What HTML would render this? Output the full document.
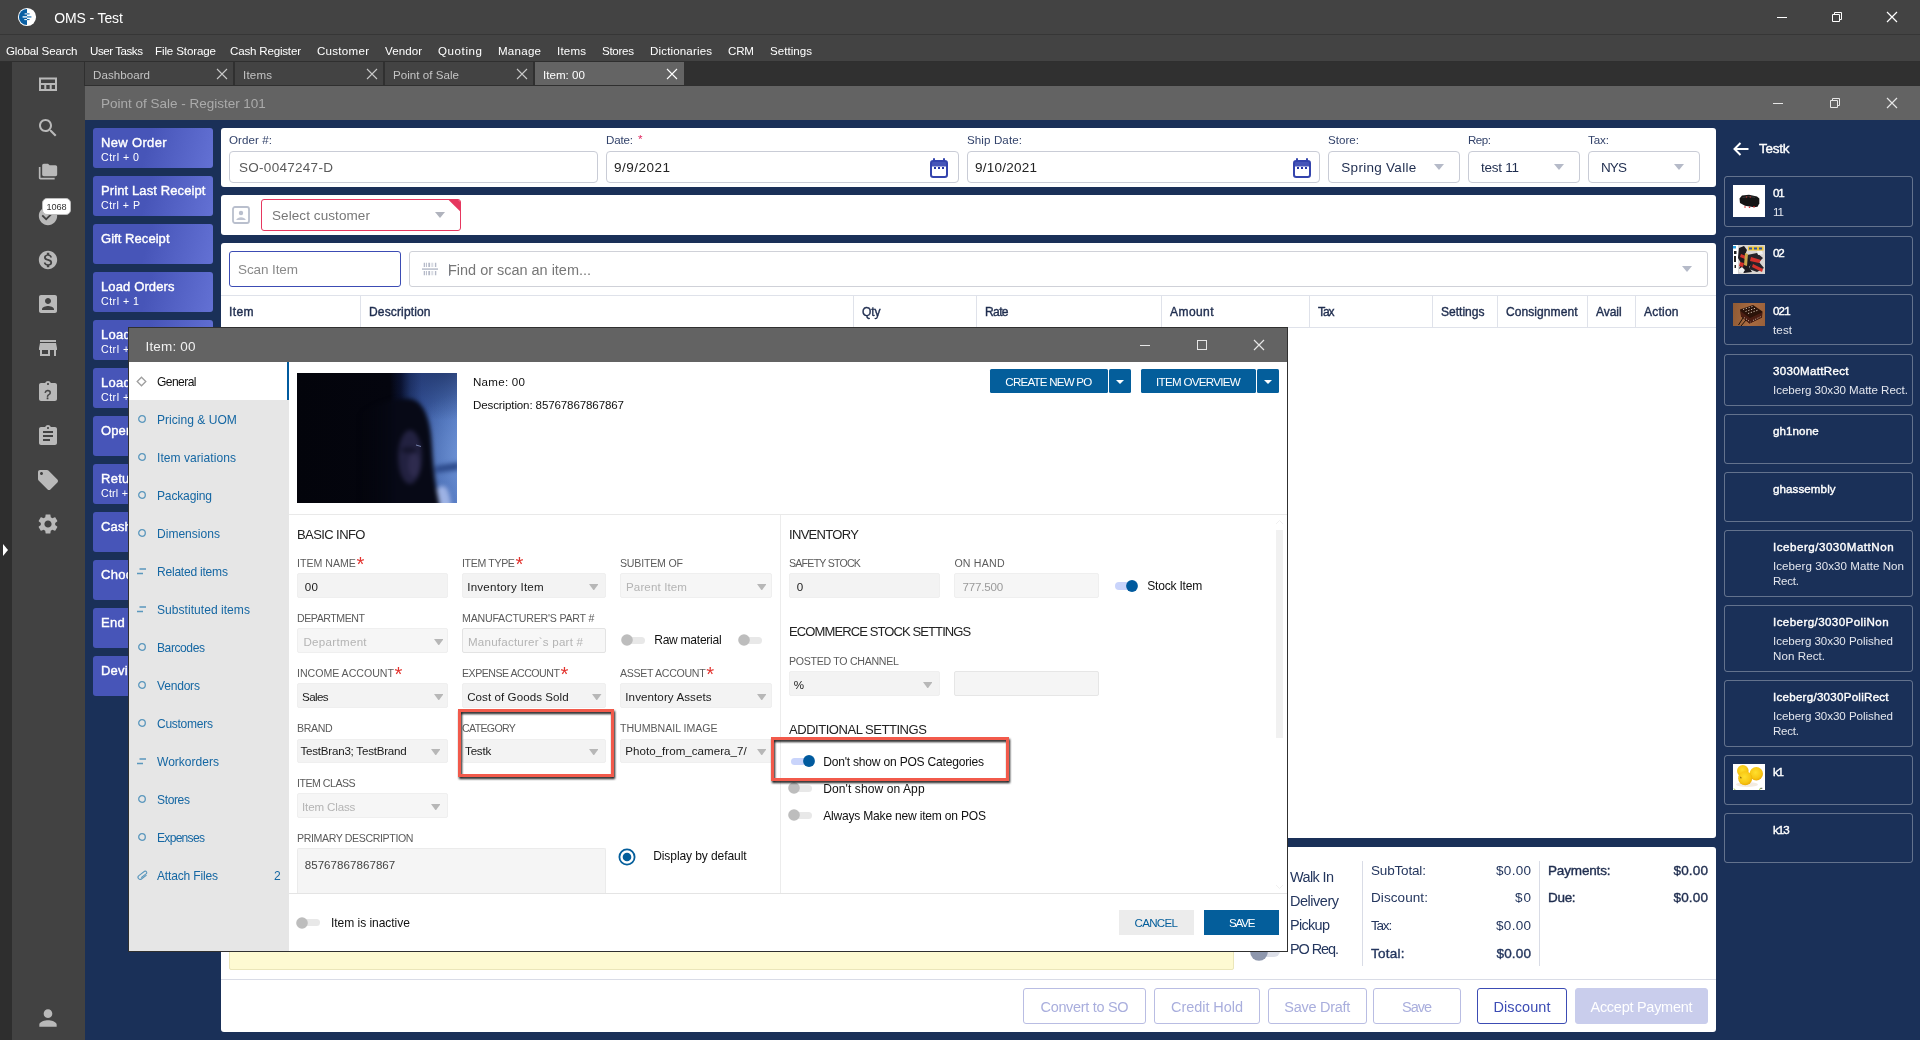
<!DOCTYPE html>
<html lang="en"><head><meta charset="utf-8"><title>OMS - Test</title>
<style>
html,body{margin:0;padding:0}
body{width:1920px;height:1040px;overflow:hidden;position:relative;background:#1a3058;font-family:"Liberation Sans",sans-serif}
#root{position:absolute;left:0;top:0;width:1920px;height:1040px;will-change:transform}
.b{position:absolute;display:block}
.t{position:absolute;white-space:nowrap;line-height:20px;height:20px}
</style></head>
<body>
<div id="root">
<div class="b" style="left:0px;top:0px;width:1920px;height:34px;background:#434343"></div>
<div class="b" style="left:0px;top:34px;width:1920px;height:1px;background:#363636"></div>
<div class="b" style="left:0px;top:35px;width:1920px;height:26px;background:#434343"></div>
<div class="b" style="left:0px;top:61px;width:1920px;height:25px;background:#303030"></div>
<div class="b" style="left:0px;top:61px;width:12px;height:979px;background:#2e2e2e"></div>
<div class="b" style="left:12px;top:61px;width:73px;height:979px;background:#424242"></div>
<div class="b" style="left:0px;top:61px;width:1920px;height:1px;background:#2f2f2f"></div>
<div class="b" style="left:84px;top:62px;width:1px;height:24px;background:#2f2f2f"></div>
<svg class="b" style="left:17px;top:7px;" width="20" height="20" viewBox="0 0 20 20"><circle cx="10" cy="10" r="9.100" fill="#fff"/><path d="M10 1.900a8.100 8.100 0 0 0 0 16.200z" fill="#0a5fa3"/><path d="M7.600 6.900H10M7.300 12.600H10" stroke="#fff" stroke-width="1"/><path d="M5.600 9.900H10" stroke="#cfe1f0" stroke-width="1.700"/><path d="M10 6.900h2.600M10 12.600h2.600" stroke="#0a5fa3" stroke-width="1"/><path d="M10 9.900h4.400" stroke="#5b9bcb" stroke-width="1.700"/></svg>
<span class="t" style="top:8px;font-size:13.99px;color:#fff;left:54.3px;letter-spacing:-0.123px;">OMS - Test</span>
<div class="b" style="left:1777px;top:17px;width:10px;height:1px;background:#fff"></div>
<svg class="b" style="left:1831px;top:11px;" width="12" height="12" viewBox="0 0 12 12"><path d="M1.5 3.5h7v7h-7zM3.5 3.5v-2h7v7h-2" fill="none" stroke="#fff" stroke-width="1"/></svg>
<svg class="b" style="left:1886px;top:11px;" width="12" height="12" viewBox="0 0 12 12"><path d="M1 1l10 10M11 1l-10 10" fill="none" stroke="#fff" stroke-width="1.2"/></svg>
<span class="t" style="top:40.5px;font-size:11.58px;color:#fff;left:6px;letter-spacing:-0.157px;">Global Search</span>
<span class="t" style="top:40.5px;font-size:11.58px;color:#fff;left:90px;letter-spacing:-0.451px;">User Tasks</span>
<span class="t" style="top:40.5px;font-size:11.58px;color:#fff;left:155px;letter-spacing:-0.130px;">File Storage</span>
<span class="t" style="top:40.5px;font-size:11.58px;color:#fff;left:230px;letter-spacing:-0.198px;">Cash Register</span>
<span class="t" style="top:40.5px;font-size:11.58px;color:#fff;left:317px;letter-spacing:0.258px;">Customer</span>
<span class="t" style="top:40.5px;font-size:11.58px;color:#fff;left:385px;letter-spacing:0.060px;">Vendor</span>
<span class="t" style="top:40.5px;font-size:11.58px;color:#fff;left:438px;letter-spacing:0.574px;">Quoting</span>
<span class="t" style="top:40.5px;font-size:11.58px;color:#fff;left:498px;letter-spacing:0.230px;">Manage</span>
<span class="t" style="top:40.5px;font-size:11.58px;color:#fff;left:557px;letter-spacing:0.172px;">Items</span>
<span class="t" style="top:40.5px;font-size:11.58px;color:#fff;left:602px;letter-spacing:-0.294px;">Stores</span>
<span class="t" style="top:40.5px;font-size:11.58px;color:#fff;left:650px;letter-spacing:0.137px;">Dictionaries</span>
<span class="t" style="top:40.5px;font-size:11.58px;color:#fff;left:728px;letter-spacing:-0.186px;">CRM</span>
<span class="t" style="top:40.5px;font-size:11.58px;color:#fff;left:770px;letter-spacing:0.023px;">Settings</span>
<div class="b" style="left:85px;top:62px;width:148px;height:23px;background:#434343"></div>
<span class="t" style="top:64.5px;font-size:11.58px;color:#c4c4c4;left:93px;letter-spacing:0.044px;">Dashboard</span>
<svg class="b" style="left:216px;top:68px;" width="12" height="12" viewBox="0 0 12 12"><path d="M1 1l10 10M11 1L1 11" stroke="#c8c8c8" stroke-width="1.1" fill="none"/></svg>
<div class="b" style="left:235px;top:62px;width:148px;height:23px;background:#434343"></div>
<span class="t" style="top:64.5px;font-size:11.58px;color:#c4c4c4;left:243px;letter-spacing:0.172px;">Items</span>
<svg class="b" style="left:366px;top:68px;" width="12" height="12" viewBox="0 0 12 12"><path d="M1 1l10 10M11 1L1 11" stroke="#c8c8c8" stroke-width="1.1" fill="none"/></svg>
<div class="b" style="left:385px;top:62px;width:148px;height:23px;background:#434343"></div>
<span class="t" style="top:64.5px;font-size:11.58px;color:#c4c4c4;left:393px;letter-spacing:0.028px;">Point of Sale</span>
<svg class="b" style="left:516px;top:68px;" width="12" height="12" viewBox="0 0 12 12"><path d="M1 1l10 10M11 1L1 11" stroke="#c8c8c8" stroke-width="1.1" fill="none"/></svg>
<div class="b" style="left:535px;top:62px;width:149px;height:23px;background:#646464"></div>
<span class="t" style="top:64.5px;font-size:11.58px;color:#fff;left:543px;letter-spacing:0.023px;">Item: 00</span>
<svg class="b" style="left:666px;top:68px;" width="12" height="12" viewBox="0 0 12 12"><path d="M1 1l10 10M11 1L1 11" stroke="#fff" stroke-width="1.1" fill="none"/></svg>
<div class="b" style="left:85px;top:85px;width:1835px;height:1px;background:#2f2f2f"></div>
<svg class="b" style="left:38px;top:76px;" width="20" height="16" viewBox="0 0 20 16"><path d="M2 2.500h16v11.500H2zM2 8h16M7.300 8v6M12.700 8v6" fill="none" stroke="#b9b9b9" stroke-width="2"/></svg>
<svg class="b" style="left:36px;top:116px;" width="24" height="24" viewBox="0 0 24 24"><path d="M15.5 14h-.79l-.28-.27C15.41 12.59 16 11.11 16 9.5 16 5.91 13.09 3 9.5 3S3 5.91 3 9.5 5.91 16 9.5 16c1.61 0 3.09-.59 4.23-1.57l.27.28v.79l5 4.99L20.49 19l-4.99-5zm-6 0C7.01 14 5 11.99 5 9.5S7.01 5 9.5 5 14 7.01 14 9.5 11.99 14 9.5 14z" fill="#b9b9b9"/></svg>
<svg class="b" style="left:38px;top:162px;" width="20" height="20" viewBox="0 0 24 24"><path d="M3 6H1v13c0 1.1.9 2 2 2h17v-2H3V6z M21 4h-7l-2-2H7c-1.1 0-1.99.9-1.99 2L5 15c0 1.1.9 2 2 2h14c1.1 0 2-.9 2-2V6c0-1.1-.9-2-2-2z" fill="#b9b9b9"/></svg>
<svg class="b" style="left:37px;top:205px;" width="22" height="22" viewBox="0 0 24 24"><path d="M12 2C6.48 2 2 6.48 2 12s4.48 10 10 10 10-4.48 10-10S17.52 2 12 2zm-2 15l-5-5 1.41-1.41L10 14.17l7.59-7.59L19 8l-9 9z" fill="#b9b9b9"/></svg>
<div class="b" style="left:42px;top:198px;width:29px;height:17px;background:#fff;border-radius:5px;border:1px solid #bbb;box-sizing:border-box"></div>
<span class="t" style="top:196.5px;font-size:9.17px;color:#333;left:46.5px;letter-spacing:-0.133px;">1068</span>
<svg class="b" style="left:37px;top:249px;" width="22" height="22" viewBox="0 0 24 24"><path d="M12 2C6.48 2 2 6.48 2 12s4.48 10 10 10 10-4.48 10-10S17.52 2 12 2zm1.41 16.09V20h-2.67v-1.93c-1.71-.36-3.16-1.46-3.27-3.4h1.96c.1 1.05.82 1.87 2.65 1.87 1.96 0 2.4-.98 2.4-1.59 0-.83-.44-1.61-2.67-2.14-2.48-.6-4.18-1.62-4.18-3.67 0-1.72 1.39-2.84 3.11-3.21V4h2.67v1.95c1.86.45 2.79 1.86 2.85 3.39H14.3c-.05-1.11-.64-1.87-2.22-1.87-1.5 0-2.4.68-2.4 1.64 0 .84.65 1.39 2.67 1.91s4.18 1.39 4.18 3.91c-.01 1.83-1.38 2.83-3.12 3.16z" fill="#b9b9b9"/></svg>
<svg class="b" style="left:36px;top:292px;" width="24" height="24" viewBox="0 0 24 24"><path d="M3 5v14c0 1.1.89 2 2 2h14c1.1 0 2-.9 2-2V5c0-1.1-.9-2-2-2H5c-1.11 0-2 .9-2 2zm12 4c0 1.66-1.34 3-3 3s-3-1.34-3-3 1.34-3 3-3 3 1.34 3 3zm-9 8c0-2 4-3.1 6-3.1s6 1.1 6 3.1v1H6v-1z" fill="#b9b9b9"/></svg>
<svg class="b" style="left:36px;top:336px;" width="24" height="24" viewBox="0 0 24 24"><path d="M20 4H4v2h16V4zm1 10v-2l-1-5H4l-1 5v2h1v6h10v-6h4v6h2v-6h1zm-9 4H6v-4h6v4z" fill="#b9b9b9"/></svg>
<svg class="b" style="left:36px;top:380px;" width="24" height="24" viewBox="0 0 24 24"><path d="M19 3h-4.18C14.4 1.84 13.3 1 12 1c-1.3 0-2.4.84-2.82 2H5c-1.1 0-2 .9-2 2v14c0 1.1.9 2 2 2h14c1.1 0 2-.9 2-2V5c0-1.1-.9-2-2-2zm-7 0c.55 0 1 .45 1 1s-.45 1-1 1-1-.45-1-1 .45-1 1-1z" fill="#b9b9b9"/></svg>
<span class="t" style="top:384.5px;font-size:12.54px;color:#404040;left:44.3px;-webkit-text-stroke:0.38px #404040;">?</span>
<svg class="b" style="left:36px;top:424px;" width="24" height="24" viewBox="0 0 24 24"><path d="M19 3h-4.18C14.4 1.84 13.3 1 12 1c-1.3 0-2.4.84-2.82 2H5c-1.1 0-2 .9-2 2v14c0 1.1.9 2 2 2h14c1.1 0 2-.9 2-2V5c0-1.1-.9-2-2-2zm-7 0c.55 0 1 .45 1 1s-.45 1-1 1-1-.45-1-1 .45-1 1-1zm2 14H7v-2h7v2zm3-4H7v-2h10v2zm0-4H7V7h10v2z" fill="#b9b9b9"/></svg>
<svg class="b" style="left:36px;top:468px;" width="24" height="24" viewBox="0 0 24 24"><path d="M21.41 11.58l-9-9C12.05 2.22 11.55 2 11 2H4c-1.1 0-2 .9-2 2v7c0 .55.22 1.05.59 1.42l9 9c.36.36.86.58 1.41.58.55 0 1.05-.22 1.41-.59l7-7c.37-.36.59-.86.59-1.41 0-.55-.23-1.06-.59-1.42zM5.5 7C4.67 7 4 6.33 4 5.5S4.67 4 5.5 4 7 4.67 7 5.5 6.33 7 5.5 7z" fill="#b9b9b9"/></svg>
<svg class="b" style="left:36px;top:512px;" width="24" height="24" viewBox="0 0 24 24"><path d="M19.14 12.94c.04-.3.06-.61.06-.94 0-.32-.02-.64-.07-.94l2.03-1.58c.18-.14.23-.41.12-.61l-1.92-3.32c-.12-.22-.37-.29-.59-.22l-2.39.96c-.5-.38-1.03-.7-1.62-.94l-.36-2.54c-.04-.24-.24-.41-.48-.41h-3.84c-.24 0-.43.17-.47.41l-.36 2.54c-.59.24-1.13.57-1.62.94l-2.39-.96c-.22-.08-.47 0-.59.22L2.74 8.87c-.12.21-.08.47.12.61l2.03 1.58c-.05.3-.09.63-.09.94s.02.64.07.94l-2.03 1.58c-.18.14-.23.41-.12.61l1.92 3.32c.12.22.37.29.59.22l2.39-.96c.5.38 1.03.7 1.62.94l.36 2.54c.05.24.24.41.48.41h3.84c.24 0 .44-.17.47-.41l.36-2.54c.59-.24 1.13-.56 1.62-.94l2.39.96c.22.08.47 0 .59-.22l1.92-3.32c.12-.22.07-.47-.12-.61l-2.01-1.58zM12 15.6c-1.98 0-3.6-1.62-3.6-3.6s1.62-3.6 3.6-3.6 3.6 1.62 3.6 3.6-1.62 3.6-3.6 3.6z" fill="#b9b9b9"/></svg>
<svg class="b" style="left:35px;top:1005px;" width="26" height="26" viewBox="0 0 24 24"><path d="M12 12c2.21 0 4-1.79 4-4s-1.79-4-4-4-4 1.79-4 4 1.79 4 4 4zm0 2c-2.67 0-8 1.34-8 4v2h16v-2c0-2.66-5.33-4-8-4z" fill="#b9b9b9"/></svg>
<svg class="b" style="left:2px;top:544px;" width="7" height="12" viewBox="0 0 7 12"><path d="M1 0l5 6-5 6z" fill="#fff"/></svg>
<div class="b" style="left:85px;top:86px;width:1835px;height:34px;background:#636363"></div>
<span class="t" style="top:94px;font-size:13.51px;color:#ababab;left:101px;letter-spacing:-0.008px;">Point of Sale - Register 101</span>
<div class="b" style="left:1773px;top:103px;width:10px;height:1px;background:#e6e6e6"></div>
<svg class="b" style="left:1829px;top:97px;" width="12" height="12" viewBox="0 0 12 12"><path d="M1.5 3.5h7v7h-7zM3.5 3.5v-2h7v7h-2" fill="none" stroke="#e6e6e6" stroke-width="1"/></svg>
<svg class="b" style="left:1886px;top:97px;" width="12" height="12" viewBox="0 0 12 12"><path d="M1 1l10 10M11 1l-10 10" fill="none" stroke="#e6e6e6" stroke-width="1.2"/></svg>
<div class="b" style="left:85px;top:120px;width:1835px;height:920px;background:#1a3058"></div>
<div class="b" style="left:93px;top:128px;width:120px;height:40px;border-radius:3px;background:linear-gradient(105deg,#4755b8 45%,#6371d4 100%)"></div>
<span class="t" style="top:132.5px;font-size:13.03px;color:#fff;left:101px;-webkit-text-stroke:0.38px #fff;letter-spacing:0.326px;">New Order</span>
<span class="t" style="top:147px;font-size:10.62px;color:#fff;left:101px;letter-spacing:0.496px;">Ctrl + 0</span>
<div class="b" style="left:93px;top:176px;width:120px;height:40px;border-radius:3px;background:linear-gradient(105deg,#4755b8 45%,#6371d4 100%)"></div>
<span class="t" style="top:180.5px;font-size:13.03px;color:#fff;left:101px;-webkit-text-stroke:0.38px #fff;letter-spacing:0.103px;">Print Last Receipt</span>
<span class="t" style="top:195px;font-size:10.62px;color:#fff;left:101px;letter-spacing:0.471px;">Ctrl + P</span>
<div class="b" style="left:93px;top:224px;width:120px;height:40px;border-radius:3px;background:linear-gradient(105deg,#4755b8 45%,#6371d4 100%)"></div>
<span class="t" style="top:228.5px;font-size:13.03px;color:#fff;left:101px;-webkit-text-stroke:0.38px #fff;letter-spacing:0.048px;">Gift Receipt</span>
<div class="b" style="left:93px;top:272px;width:120px;height:40px;border-radius:3px;background:linear-gradient(105deg,#4755b8 45%,#6371d4 100%)"></div>
<span class="t" style="top:276.5px;font-size:13.03px;color:#fff;left:101px;-webkit-text-stroke:0.38px #fff;letter-spacing:0.117px;">Load Orders</span>
<span class="t" style="top:291px;font-size:10.62px;color:#fff;left:101px;letter-spacing:0.496px;">Ctrl + 1</span>
<div class="b" style="left:93px;top:320px;width:120px;height:40px;border-radius:3px;background:linear-gradient(105deg,#4755b8 45%,#6371d4 100%)"></div>
<span class="t" style="top:324.5px;font-size:13.03px;color:#fff;left:101px;-webkit-text-stroke:0.38px #fff;letter-spacing:0.275px;">Load Drafts</span>
<span class="t" style="top:339px;font-size:10.62px;color:#fff;left:101px;letter-spacing:0.496px;">Ctrl + 2</span>
<div class="b" style="left:93px;top:368px;width:120px;height:40px;border-radius:3px;background:linear-gradient(105deg,#4755b8 45%,#6371d4 100%)"></div>
<span class="t" style="top:372.5px;font-size:13.03px;color:#fff;left:101px;-webkit-text-stroke:0.38px #fff;letter-spacing:0.254px;">Load Quotes</span>
<span class="t" style="top:387px;font-size:10.62px;color:#fff;left:101px;letter-spacing:0.496px;">Ctrl + 3</span>
<div class="b" style="left:93px;top:416px;width:120px;height:40px;border-radius:3px;background:linear-gradient(105deg,#4755b8 45%,#6371d4 100%)"></div>
<span class="t" style="top:420.5px;font-size:13.03px;color:#fff;left:101px;-webkit-text-stroke:0.38px #fff;letter-spacing:0.110px;">Open Drawer</span>
<div class="b" style="left:93px;top:464px;width:120px;height:40px;border-radius:3px;background:linear-gradient(105deg,#4755b8 45%,#6371d4 100%)"></div>
<span class="t" style="top:468.5px;font-size:13.03px;color:#fff;left:101px;-webkit-text-stroke:0.38px #fff;letter-spacing:0.276px;">Return</span>
<span class="t" style="top:483px;font-size:10.62px;color:#fff;left:101px;letter-spacing:0.244px;">Ctrl + R</span>
<div class="b" style="left:93px;top:512px;width:120px;height:40px;border-radius:3px;background:linear-gradient(105deg,#4755b8 45%,#6371d4 100%)"></div>
<span class="t" style="top:516.5px;font-size:13.03px;color:#fff;left:101px;-webkit-text-stroke:0.38px #fff;letter-spacing:0.128px;">Cash In/Out</span>
<div class="b" style="left:93px;top:560px;width:120px;height:40px;border-radius:3px;background:linear-gradient(105deg,#4755b8 45%,#6371d4 100%)"></div>
<span class="t" style="top:564.5px;font-size:13.03px;color:#fff;left:101px;-webkit-text-stroke:0.38px #fff;letter-spacing:0.281px;">Choose Printer</span>
<div class="b" style="left:93px;top:608px;width:120px;height:40px;border-radius:3px;background:linear-gradient(105deg,#4755b8 45%,#6371d4 100%)"></div>
<span class="t" style="top:612.5px;font-size:13.03px;color:#fff;left:101px;-webkit-text-stroke:0.38px #fff;letter-spacing:0.301px;">End Shift</span>
<div class="b" style="left:93px;top:656px;width:120px;height:40px;border-radius:3px;background:linear-gradient(105deg,#4755b8 45%,#6371d4 100%)"></div>
<span class="t" style="top:660.5px;font-size:13.03px;color:#fff;left:101px;-webkit-text-stroke:0.38px #fff;letter-spacing:0.206px;">Devices</span>
<div class="b" style="left:221px;top:128px;width:1495px;height:59px;background:#fff;border-radius:3px"></div>
<span class="t" style="top:129.5px;font-size:11.58px;color:#33436b;left:229px;letter-spacing:0.075px;">Order #:</span>
<span class="t" style="top:129.5px;font-size:11.58px;color:#33436b;left:606px;letter-spacing:-0.169px;">Date:</span>
<span class="t" style="top:129.5px;font-size:11.58px;color:#33436b;left:967px;letter-spacing:0.103px;">Ship Date:</span>
<span class="t" style="top:129.5px;font-size:11.58px;color:#33436b;left:1328px;letter-spacing:0.021px;">Store:</span>
<span class="t" style="top:129.5px;font-size:11.58px;color:#33436b;left:1468px;letter-spacing:-0.487px;">Rep:</span>
<span class="t" style="top:129.5px;font-size:11.58px;color:#33436b;left:1588px;letter-spacing:-0.079px;">Tax:</span>
<span class="t" style="top:128.5px;font-size:11.58px;color:#e0245e;left:638px;">*</span>
<div class="b" style="left:229px;top:151px;width:369px;height:32px;box-sizing:border-box;border:1px solid #c9ccd6;border-radius:4px;background:#fff"></div>
<div class="b" style="left:606px;top:151px;width:353px;height:32px;box-sizing:border-box;border:1px solid #c9ccd6;border-radius:4px;background:#fff"></div>
<div class="b" style="left:967px;top:151px;width:353px;height:32px;box-sizing:border-box;border:1px solid #c9ccd6;border-radius:4px;background:#fff"></div>
<div class="b" style="left:1328px;top:151px;width:132px;height:32px;box-sizing:border-box;border:1px solid #c9ccd6;border-radius:4px;background:#fff"></div>
<div class="b" style="left:1468px;top:151px;width:112px;height:32px;box-sizing:border-box;border:1px solid #c9ccd6;border-radius:4px;background:#fff"></div>
<div class="b" style="left:1588px;top:151px;width:112px;height:32px;box-sizing:border-box;border:1px solid #c9ccd6;border-radius:4px;background:#fff"></div>
<span class="t" style="top:158px;font-size:13.51px;color:#5a5a5a;left:239px;letter-spacing:0.285px;">SO-0047247-D</span>
<span class="t" style="top:158px;font-size:13.51px;color:#222;left:614px;letter-spacing:0.487px;">9/9/2021</span>
<span class="t" style="top:158px;font-size:13.51px;color:#222;left:975px;letter-spacing:0.237px;">9/10/2021</span>
<span class="t" style="top:158px;font-size:13.51px;color:#1f2d4f;left:1341.3px;letter-spacing:0.287px;">Spring Valle</span>
<span class="t" style="top:158px;font-size:13.51px;color:#1f2d4f;left:1481px;letter-spacing:-0.259px;">test 11</span>
<span class="t" style="top:158px;font-size:13.51px;color:#1f2d4f;left:1601px;letter-spacing:-0.889px;">NYS</span>
<svg class="b" style="left:1434px;top:164px;" width="10" height="6" viewBox="0 0 10 6"><path d="M0 0h10l-5.0 6z" fill="#b5bac8"/></svg>
<svg class="b" style="left:1554px;top:164px;" width="10" height="6" viewBox="0 0 10 6"><path d="M0 0h10l-5.0 6z" fill="#b5bac8"/></svg>
<svg class="b" style="left:1674px;top:164px;" width="10" height="6" viewBox="0 0 10 6"><path d="M0 0h10l-5.0 6z" fill="#b5bac8"/></svg>
<svg class="b" style="left:929px;top:157px;" width="20" height="22" viewBox="0 0 20 22"><path d="M2 4.500h16v5H2z" fill="#4655b8"/><rect x="2" y="4" width="16" height="16" rx="2.200" fill="none" stroke="#3444ad" stroke-width="2"/><path d="M5 1.200v3M15 1.200v3" stroke="#3444ad" stroke-width="2"/><path d="M5 10h2v2H5zM9 10h2v2H9zM13 10h2v2h-2z" fill="#2535a5"/></svg>
<svg class="b" style="left:1292px;top:157px;" width="20" height="22" viewBox="0 0 20 22"><path d="M2 4.500h16v5H2z" fill="#4655b8"/><rect x="2" y="4" width="16" height="16" rx="2.200" fill="none" stroke="#3444ad" stroke-width="2"/><path d="M5 1.200v3M15 1.200v3" stroke="#3444ad" stroke-width="2"/><path d="M5 10h2v2H5zM9 10h2v2H9zM13 10h2v2h-2z" fill="#2535a5"/></svg>
<div class="b" style="left:221px;top:195px;width:1495px;height:40px;background:#fff;border-radius:3px"></div>
<svg class="b" style="left:231px;top:205px;" width="20" height="20" viewBox="0 0 20 20"><rect x="2" y="2" width="16" height="16" rx="2" fill="none" stroke="#b9bfcd" stroke-width="1.800"/><circle cx="10" cy="8" r="2.200" fill="#b9bfcd"/><path d="M5.200 15c0.800-1.900 2.700-2.800 4.800-2.800s4 .9 4.800 2.800z" fill="#c0c5d2"/></svg>
<div class="b" style="left:261px;top:199px;width:200px;height:32px;box-sizing:border-box;border:1px solid #e6375f;border-radius:3px;background:#fff;overflow:hidden"><div style="position:absolute;right:-8px;top:-8px;width:16px;height:16px;background:#e6375f;transform:rotate(45deg)"></div></div>
<span class="t" style="top:206px;font-size:13.51px;color:#777;left:272px;letter-spacing:0.081px;">Select customer</span>
<svg class="b" style="left:435px;top:212px;" width="10" height="6" viewBox="0 0 10 6"><path d="M0 0h10l-5.0 6z" fill="#b0b3bd"/></svg>
<div class="b" style="left:221px;top:243px;width:1495px;height:595px;background:#fff;border-radius:3px"></div>
<div class="b" style="left:229px;top:251px;width:172px;height:36px;box-sizing:border-box;border:1px solid #3c4cb4;border-radius:3px;background:#fff"></div>
<span class="t" style="top:260px;font-size:13.51px;color:#8a8a8a;left:238px;letter-spacing:-0.103px;">Scan Item</span>
<div class="b" style="left:409px;top:251px;width:1299px;height:36px;box-sizing:border-box;border:1px solid #cfd1d8;border-radius:3px;background:#fff"></div>
<svg class="b" style="left:422px;top:262px;" width="16" height="14" viewBox="0 0 16 14"><path d="M0 6.300h16v1.600H0z" fill="#bcc1cd"/><g fill="#b5bac8"><path d="M1.700 0.800h1.300v4.200H1.700zM3.900 0.800h1v4.200h-1zM6.300 0.800h1.800v4.200H6.300zM12.900 0.800h1.400v4.200h-1.400zM1.700 9h1.300v4.200H1.700zM3.900 9h1v4.200h-1zM6.300 9h1.800v4.200H6.300zM12.900 9h1.400v4.200h-1.400z"/><path d="M9.300 0.800h2v4.200h-2zM9.300 9h2v4.200h-2z" fill="#d9dce3"/></g></svg>
<div class="b" style="left:449px;top:264px;width:1px;height:11.5px;background:#8d95ab"></div>
<span class="t" style="top:259.5px;font-size:14.47px;color:#777;left:448px;letter-spacing:-0.007px;">Find or scan an item...</span>
<svg class="b" style="left:1682px;top:265.8px;" width="10" height="6" viewBox="0 0 10 6"><path d="M0 0h10l-5.0 6z" fill="#b5bac8"/></svg>
<div class="b" style="left:221px;top:295px;width:1495px;height:1px;background:#dfe2ea"></div>
<div class="b" style="left:221px;top:327px;width:1495px;height:1px;background:#dfe2ea"></div>
<span class="t" style="top:302px;font-size:12.06px;color:#1f2d4f;left:229px;-webkit-text-stroke:0.38px #1f2d4f;letter-spacing:0.382px;">Item</span>
<span class="t" style="top:302px;font-size:12.06px;color:#1f2d4f;left:369px;-webkit-text-stroke:0.38px #1f2d4f;letter-spacing:0.128px;">Description</span>
<span class="t" style="top:302px;font-size:12.06px;color:#1f2d4f;left:862px;-webkit-text-stroke:0.38px #1f2d4f;letter-spacing:-0.081px;">Qty</span>
<span class="t" style="top:302px;font-size:12.06px;color:#1f2d4f;left:985px;-webkit-text-stroke:0.38px #1f2d4f;letter-spacing:-0.625px;">Rate</span>
<span class="t" style="top:302px;font-size:12.06px;color:#1f2d4f;left:1170px;-webkit-text-stroke:0.38px #1f2d4f;letter-spacing:0.407px;">Amount</span>
<span class="t" style="top:302px;font-size:12.06px;color:#1f2d4f;left:1318px;-webkit-text-stroke:0.38px #1f2d4f;letter-spacing:-1.084px;">Tax</span>
<span class="t" style="top:302px;font-size:12.06px;color:#1f2d4f;left:1441px;-webkit-text-stroke:0.38px #1f2d4f;">Settings</span>
<span class="t" style="top:302px;font-size:12.06px;color:#1f2d4f;left:1506px;-webkit-text-stroke:0.38px #1f2d4f;letter-spacing:0.054px;">Consignment</span>
<span class="t" style="top:302px;font-size:12.06px;color:#1f2d4f;left:1596px;-webkit-text-stroke:0.38px #1f2d4f;letter-spacing:-0.081px;">Avail</span>
<span class="t" style="top:302px;font-size:12.06px;color:#1f2d4f;left:1644px;-webkit-text-stroke:0.38px #1f2d4f;letter-spacing:0.216px;">Action</span>
<div class="b" style="left:360px;top:296px;width:1px;height:31px;background:#dfe2ea"></div>
<div class="b" style="left:853px;top:296px;width:1px;height:31px;background:#dfe2ea"></div>
<div class="b" style="left:976px;top:296px;width:1px;height:31px;background:#dfe2ea"></div>
<div class="b" style="left:1161px;top:296px;width:1px;height:31px;background:#dfe2ea"></div>
<div class="b" style="left:1309px;top:296px;width:1px;height:31px;background:#dfe2ea"></div>
<div class="b" style="left:1432px;top:296px;width:1px;height:31px;background:#dfe2ea"></div>
<div class="b" style="left:1497px;top:296px;width:1px;height:31px;background:#dfe2ea"></div>
<div class="b" style="left:1587px;top:296px;width:1px;height:31px;background:#dfe2ea"></div>
<div class="b" style="left:1635px;top:296px;width:1px;height:31px;background:#dfe2ea"></div>
<div class="b" style="left:221px;top:847px;width:1495px;height:185px;background:#fff;border-radius:3px"></div>
<div class="b" style="left:229px;top:930px;width:1004.5px;height:40px;box-sizing:border-box;background:#fefad2;border:1px solid #ebe6b9;border-radius:2px"></div>
<div class="b" style="left:221px;top:979px;width:1495px;height:1px;background:#d9dce6"></div>
<div class="b" style="left:1362px;top:861px;width:1px;height:105px;background:#d9dce6"></div>
<div class="b" style="left:1539px;top:861px;width:1px;height:105px;background:#d9dce6"></div>
<div class="b" style="left:1256px;top:945px;width:24px;height:12px;background:#dcdfe8;border-radius:6px"></div>
<svg class="b" style="left:1248.8px;top:941.5px;" width="20" height="20" viewBox="0 0 20 20"><circle cx="10" cy="10" r="8.800" fill="#8e97ad"/></svg>
<span class="t" style="top:867px;font-size:14.47px;color:#24365e;left:1290px;letter-spacing:-0.618px;">Walk In</span>
<span class="t" style="top:891px;font-size:14.47px;color:#24365e;left:1290px;letter-spacing:-0.466px;">Delivery</span>
<span class="t" style="top:915px;font-size:14.47px;color:#24365e;left:1290px;letter-spacing:-0.686px;">Pickup</span>
<span class="t" style="top:939px;font-size:14.47px;color:#24365e;left:1290px;letter-spacing:-1.082px;">PO Req.</span>
<span class="t" style="top:861px;font-size:13.51px;color:#24365e;left:1371px;letter-spacing:-0.166px;">SubTotal:</span>
<span class="t" style="top:861px;font-size:13.51px;color:#24365e;right:388.70px;letter-spacing:0.298px;">$0.00</span>
<span class="t" style="top:888px;font-size:13.51px;color:#24365e;left:1371px;letter-spacing:0.085px;">Discount:</span>
<span class="t" style="top:888px;font-size:13.51px;color:#24365e;right:388.03px;letter-spacing:0.973px;">$0</span>
<span class="t" style="top:916px;font-size:13.51px;color:#24365e;left:1371px;letter-spacing:-1.200px;">Tax:</span>
<span class="t" style="top:916px;font-size:13.51px;color:#24365e;right:388.70px;letter-spacing:0.298px;">$0.00</span>
<span class="t" style="top:944px;font-size:13.51px;color:#24365e;left:1371px;-webkit-text-stroke:0.38px #24365e;letter-spacing:0.262px;">Total:</span>
<span class="t" style="top:944px;font-size:13.51px;color:#24365e;right:388.80px;-webkit-text-stroke:0.38px #24365e;letter-spacing:0.198px;">$0.00</span>
<span class="t" style="top:861px;font-size:13.51px;color:#1f2d4f;left:1548px;-webkit-text-stroke:0.38px #1f2d4f;letter-spacing:-0.153px;">Payments:</span>
<span class="t" style="top:861px;font-size:13.51px;color:#1f2d4f;right:211.80px;-webkit-text-stroke:0.38px #1f2d4f;letter-spacing:0.198px;">$0.00</span>
<span class="t" style="top:888px;font-size:13.51px;color:#1f2d4f;left:1548px;-webkit-text-stroke:0.38px #1f2d4f;letter-spacing:-0.312px;">Due:</span>
<span class="t" style="top:888px;font-size:13.51px;color:#1f2d4f;right:211.80px;-webkit-text-stroke:0.38px #1f2d4f;letter-spacing:0.198px;">$0.00</span>
<div class="b" style="left:1023px;top:988px;width:123px;height:36px;box-sizing:border-box;border-radius:3px;border:1px solid #b9bde3"></div>
<span class="t" style="top:996.5px;font-size:14.47px;color:#a9aedd;left:1040.5px;letter-spacing:-0.307px;">Convert to SO</span>
<div class="b" style="left:1154px;top:988px;width:106px;height:36px;box-sizing:border-box;border-radius:3px;border:1px solid #b9bde3"></div>
<span class="t" style="top:996.5px;font-size:14.47px;color:#a9aedd;left:1171px;letter-spacing:-0.038px;">Credit Hold</span>
<div class="b" style="left:1268px;top:988px;width:98.5px;height:36px;box-sizing:border-box;border-radius:3px;border:1px solid #b9bde3"></div>
<span class="t" style="top:996.5px;font-size:14.47px;color:#a9aedd;left:1284.25px;letter-spacing:-0.262px;">Save Draft</span>
<div class="b" style="left:1373px;top:988px;width:88px;height:36px;box-sizing:border-box;border-radius:3px;border:1px solid #b9bde3"></div>
<span class="t" style="top:996.5px;font-size:14.47px;color:#a9aedd;left:1402px;letter-spacing:-0.994px;">Save</span>
<div class="b" style="left:1477px;top:988px;width:90px;height:36px;box-sizing:border-box;border-radius:3px;border:1px solid #3c4cb4"></div>
<span class="t" style="top:996.5px;font-size:14.47px;color:#3c4cb4;left:1493.5px;letter-spacing:0.100px;">Discount</span>
<div class="b" style="left:1575px;top:988px;width:133px;height:36px;box-sizing:border-box;border-radius:3px;background:#c9cdec;border:1px solid #c9cdec"></div>
<span class="t" style="top:996.5px;font-size:14.47px;color:#fff;left:1590.5px;letter-spacing:-0.258px;">Accept Payment</span>
<svg class="b" style="left:1732px;top:141px;" width="18" height="16" viewBox="0 0 18 16"><path d="M16.500 8H3M8.500 2L2.500 8l6 6" fill="none" stroke="#fff" stroke-width="2"/></svg>
<span class="t" style="top:139px;font-size:13.51px;color:#fff;left:1759px;-webkit-text-stroke:0.38px #fff;letter-spacing:-0.233px;">Testk</span>
<div class="b" style="left:1724px;top:176px;width:189px;height:51px;box-sizing:border-box;border:1px solid rgba(255,255,255,.32);border-radius:3px"></div>
<span class="t" style="top:182.5px;font-size:11.58px;color:#fff;left:1773px;-webkit-text-stroke:0.38px #fff;letter-spacing:-1.200px;">01</span>
<span class="t" style="top:201.5px;font-size:11.58px;color:#e3e6ee;left:1773px;letter-spacing:-1.021px;">11</span>
<div class="b" style="left:1733px;top:185px;width:32px;height:32px;background:#fff"></div>
<svg class="b" style="left:1733px;top:185px;" width="32" height="32" viewBox="0 0 32 32"><path d="M6.500 13.500L9 10.600l7-.800 8 1.700 2.300 2v5l-1.800 3.300-3.500.500-9-1.500-5-2.800z" fill="#141414"/><path d="M9.500 12.500l6-.900 6.500.700" stroke="#3a3a3a" stroke-width="1" fill="none"/><circle cx="13.500" cy="12" r=".700" fill="#b33"/><circle cx="17.300" cy="12" r=".700" fill="#b33"/><circle cx="12" cy="22" r=".800" fill="#d22"/><circle cx="16.500" cy="22.300" r=".800" fill="#d22"/><circle cx="21" cy="21.800" r=".800" fill="#d22"/></svg>
<div class="b" style="left:1724px;top:236px;width:189px;height:50px;box-sizing:border-box;border:1px solid rgba(255,255,255,.32);border-radius:3px"></div>
<span class="t" style="top:242.5px;font-size:11.58px;color:#fff;left:1773px;-webkit-text-stroke:0.38px #fff;letter-spacing:-1.200px;">02</span>
<div class="b" style="left:1733px;top:245px;width:32px;height:29px;background:#fff"></div>
<svg class="b" style="left:1733px;top:245px;" width="32" height="29" viewBox="0 0 32 29"><defs><filter color-interpolation-filters="sRGB" id="fb" x="-10%" y="-10%" width="120%" height="120%"><feGaussianBlur stdDeviation=".450"/></filter></defs><rect x="5" y="0" width="27" height="29" fill="#d9d5d2"/><g filter="url(#fb)"><path d="M0 1h3v2.500H0z" fill="#2aa1e0"/><path d="M1 6h2.500v3H1zM1 11h2v6H1zM1.500 20h1.500v3h-1.500z" fill="#222"/><path d="M6 3l5-2 3 4-2 5 6 1 2 6-4 5 3 5-8 1-5-4 2-6-3-5z" fill="#1c1a1f"/><path d="M14 10l10-2 6 5-4 4 5 6-7 4-8-3 2-6z" fill="#26232a"/><path d="M18 12l10 3-2 3-9-2zM20 19l10 5-1 3-10-5zM8 9l5 2-1 3-5-2zM7 17l4 1-1 4-4-1z" fill="#d3312b"/><path d="M12 8l3 1-1 12-3-1z" fill="#c9a54a"/><path d="M15 1.500h15.500v4H15z" fill="#f0c628"/><path d="M16 2.500h3v2h-3zM21 2.500h3v2h-3zM26 2.500h3v2h-3z" fill="#2f52a8"/><path d="M6 24l3-2 3 3-2 3-4-1zM24 6l5 0 1 3-5 1z" fill="#efefef"/></g></svg>
<div class="b" style="left:1724px;top:294px;width:189px;height:51px;box-sizing:border-box;border:1px solid rgba(255,255,255,.32);border-radius:3px"></div>
<span class="t" style="top:300.5px;font-size:11.58px;color:#fff;left:1773px;-webkit-text-stroke:0.38px #fff;letter-spacing:-0.860px;">021</span>
<span class="t" style="top:319.5px;font-size:11.58px;color:#e3e6ee;left:1773px;letter-spacing:0.112px;">test</span>
<div class="b" style="left:1733px;top:303px;width:32px;height:23px;background:linear-gradient(100deg,#8f5a34,#a96c42 55%,#9a6039)"></div>
<svg class="b" style="left:1733px;top:303px;" width="32" height="23" viewBox="0 0 32 23"><defs><filter color-interpolation-filters="sRGB" id="fc" x="-10%" y="-10%" width="120%" height="120%"><feGaussianBlur stdDeviation=".350"/></filter></defs><g filter="url(#fc)"><path d="M7 6.500l13-4.500 9.500 6.500-.500 6-12.500 6-8.500-7z" fill="#2b1309"/><path d="M8 13l8.500 7.500 12.500-6v-5l-12 5.500-9-6.500z" fill="#4a1d12"/><path d="M10 6.500l10-3.200M12.500 8.500l10.500-3.500M15 10.500l11-3.700" stroke="#c9b9a8" stroke-width="1" stroke-dasharray="1.300 1.600" fill="none"/><path d="M11 14.500l6.500 4.500M20 17.500l8-4" stroke="#d8c8b5" stroke-width=".900" stroke-dasharray="1 1.500" fill="none"/><path d="M10 15l-4.500 7M13 17l-5 6" stroke="#0d0805" stroke-width=".900" fill="none"/></g></svg>
<div class="b" style="left:1724px;top:354px;width:189px;height:52px;box-sizing:border-box;border:1px solid rgba(255,255,255,.32);border-radius:3px"></div>
<span class="t" style="top:360.5px;font-size:11.58px;color:#fff;left:1773px;-webkit-text-stroke:0.38px #fff;letter-spacing:0.319px;">3030MattRect</span>
<span class="t" style="top:379.5px;font-size:11.58px;color:#e3e6ee;left:1773px;letter-spacing:-0.034px;">Iceberg 30x30 Matte Rect.</span>
<div class="b" style="left:1724px;top:414px;width:189px;height:50px;box-sizing:border-box;border:1px solid rgba(255,255,255,.32);border-radius:3px"></div>
<span class="t" style="top:420.5px;font-size:11.58px;color:#fff;left:1773px;-webkit-text-stroke:0.38px #fff;letter-spacing:0.086px;">gh1none</span>
<div class="b" style="left:1724px;top:472px;width:189px;height:50px;box-sizing:border-box;border:1px solid rgba(255,255,255,.32);border-radius:3px"></div>
<span class="t" style="top:478.5px;font-size:11.58px;color:#fff;left:1773px;-webkit-text-stroke:0.38px #fff;letter-spacing:0.090px;">ghassembly</span>
<div class="b" style="left:1724px;top:530px;width:189px;height:67px;box-sizing:border-box;border:1px solid rgba(255,255,255,.32);border-radius:3px"></div>
<span class="t" style="top:536.5px;font-size:11.58px;color:#fff;left:1773px;-webkit-text-stroke:0.38px #fff;letter-spacing:0.513px;">Iceberg/3030MattNon</span>
<span class="t" style="top:555.5px;font-size:11.58px;color:#e3e6ee;left:1773px;letter-spacing:0.044px;">Iceberg 30x30 Matte Non</span>
<span class="t" style="top:570.5px;font-size:11.58px;color:#e3e6ee;left:1773px;letter-spacing:-0.257px;">Rect.</span>
<div class="b" style="left:1724px;top:605px;width:189px;height:67px;box-sizing:border-box;border:1px solid rgba(255,255,255,.32);border-radius:3px"></div>
<span class="t" style="top:611.5px;font-size:11.58px;color:#fff;left:1773px;-webkit-text-stroke:0.38px #fff;letter-spacing:0.414px;">Iceberg/3030PoliNon</span>
<span class="t" style="top:630.5px;font-size:11.58px;color:#e3e6ee;left:1773px;letter-spacing:-0.049px;">Iceberg 30x30 Polished</span>
<span class="t" style="top:645.5px;font-size:11.58px;color:#e3e6ee;left:1773px;letter-spacing:0.064px;">Non Rect.</span>
<div class="b" style="left:1724px;top:680px;width:189px;height:67px;box-sizing:border-box;border:1px solid rgba(255,255,255,.32);border-radius:3px"></div>
<span class="t" style="top:686.5px;font-size:11.58px;color:#fff;left:1773px;-webkit-text-stroke:0.38px #fff;letter-spacing:0.257px;">Iceberg/3030PoliRect</span>
<span class="t" style="top:705.5px;font-size:11.58px;color:#e3e6ee;left:1773px;letter-spacing:-0.049px;">Iceberg 30x30 Polished</span>
<span class="t" style="top:720.5px;font-size:11.58px;color:#e3e6ee;left:1773px;letter-spacing:-0.257px;">Rect.</span>
<div class="b" style="left:1724px;top:755px;width:189px;height:50px;box-sizing:border-box;border:1px solid rgba(255,255,255,.32);border-radius:3px"></div>
<span class="t" style="top:761.5px;font-size:11.58px;color:#fff;left:1773px;-webkit-text-stroke:0.38px #fff;letter-spacing:-1.200px;">k1</span>
<div class="b" style="left:1733px;top:764px;width:32px;height:26px;background:#fff"></div>
<svg class="b" style="left:1733px;top:764px;" width="32" height="26" viewBox="0 0 32 26"><defs><radialGradient id="ap" cx=".450" cy=".400" r=".650"><stop offset="0" stop-color="#ffdf2e"/><stop offset=".650" stop-color="#f8c714"/><stop offset="1" stop-color="#e8a400"/></radialGradient><filter color-interpolation-filters="sRGB" id="fd" x="-10%" y="-10%" width="120%" height="120%"><feGaussianBlur stdDeviation=".350"/></filter></defs><g filter="url(#fd)"><ellipse cx="14" cy="20.500" rx="11" ry="2.500" fill="#f3ebe0"/><circle cx="9.800" cy="6.800" r="5.800" fill="url(#ap)"/><circle cx="23.300" cy="9.800" r="6.700" fill="url(#ap)"/><circle cx="12.200" cy="14.300" r="7" fill="url(#ap)"/><path d="M7 12.500l1.500 1-.500 1.500z" fill="#5a3a00"/><path d="M1 24.500l1.200 1.500M26.500 26l1-2" stroke="#8bc220" stroke-width=".900"/><path d="M27.500 24.300h1.800" stroke="#333" stroke-width=".800"/></g></svg>
<div class="b" style="left:1724px;top:813px;width:189px;height:50px;box-sizing:border-box;border:1px solid rgba(255,255,255,.32);border-radius:3px"></div>
<span class="t" style="top:819.5px;font-size:11.58px;color:#fff;left:1773px;-webkit-text-stroke:0.38px #fff;letter-spacing:-1.035px;">k13</span>
<div class="b" style="left:128px;top:327px;width:1160px;height:624.7px;background:#303030"></div>
<div class="b" style="left:129px;top:328px;width:1158px;height:622.7px;background:#fff"></div>
<div class="b" style="left:129px;top:328px;width:1158px;height:33.5px;background:#636363"></div>
<span class="t" style="top:336.5px;font-size:13.51px;color:#f0f0f0;left:145.5px;letter-spacing:0.170px;">Item: 00</span>
<div class="b" style="left:1140px;top:345px;width:10px;height:1px;background:#e6e6e6"></div>
<div class="b" style="left:1197px;top:340px;width:10px;height:10px;border:1px solid #e6e6e6;box-sizing:border-box"></div>
<svg class="b" style="left:1253px;top:339px;" width="12" height="12" viewBox="0 0 12 12"><path d="M1 1l10 10M11 1l-10 10" fill="none" stroke="#e6e6e6" stroke-width="1.2"/></svg>
<div class="b" style="left:129px;top:361.5px;width:160px;height:589.2px;background:#e6e6e6"></div>
<div class="b" style="left:129px;top:361.5px;width:158px;height:38.3px;background:#fff"></div>
<div class="b" style="left:287px;top:361.5px;width:2px;height:38.3px;background:#005a9e"></div>
<span class="t" style="top:371.9px;font-size:12.06px;color:#111;left:157px;letter-spacing:-0.568px;">General</span>
<svg class="b" style="left:136px;top:375.5px;" width="11" height="11" viewBox="0 0 11 11"><path d="M5.500 1.200l4.300 4.300-4.300 4.300-4.300-4.300z" fill="none" stroke="#9e9e9e" stroke-width="1.300"/></svg>
<span class="t" style="top:409.9px;font-size:12.06px;color:#1567a3;left:157px;letter-spacing:0.021px;">Pricing &amp; UOM</span>
<svg class="b" style="left:137px;top:413.9px;" width="10" height="10" viewBox="0 0 10 10"><circle cx="5" cy="5" r="3.300" fill="none" stroke="#5a97bd" stroke-width="1.300"/></svg>
<span class="t" style="top:447.9px;font-size:12.06px;color:#1567a3;left:157px;letter-spacing:0.041px;">Item variations</span>
<svg class="b" style="left:137px;top:451.9px;" width="10" height="10" viewBox="0 0 10 10"><circle cx="5" cy="5" r="3.300" fill="none" stroke="#5a97bd" stroke-width="1.300"/></svg>
<span class="t" style="top:485.9px;font-size:12.06px;color:#1567a3;left:157px;letter-spacing:-0.165px;">Packaging</span>
<svg class="b" style="left:137px;top:489.9px;" width="10" height="10" viewBox="0 0 10 10"><circle cx="5" cy="5" r="3.300" fill="none" stroke="#5a97bd" stroke-width="1.300"/></svg>
<span class="t" style="top:523.9px;font-size:12.06px;color:#1567a3;left:157px;">Dimensions</span>
<svg class="b" style="left:137px;top:527.9px;" width="10" height="10" viewBox="0 0 10 10"><circle cx="5" cy="5" r="3.300" fill="none" stroke="#5a97bd" stroke-width="1.300"/></svg>
<span class="t" style="top:561.9px;font-size:12.06px;color:#1567a3;left:157px;letter-spacing:-0.228px;">Related items</span>
<svg class="b" style="left:136px;top:566.9px;" width="11" height="9" viewBox="0 0 11 9"><path d="M3.500 2h6.500M1 6.500h6" stroke="#5a97bd" stroke-width="1.300"/></svg>
<span class="t" style="top:599.9px;font-size:12.06px;color:#1567a3;left:157px;letter-spacing:0.031px;">Substituted items</span>
<svg class="b" style="left:136px;top:604.9px;" width="11" height="9" viewBox="0 0 11 9"><path d="M3.500 2h6.500M1 6.500h6" stroke="#5a97bd" stroke-width="1.300"/></svg>
<span class="t" style="top:637.9px;font-size:12.06px;color:#1567a3;left:157px;letter-spacing:-0.421px;">Barcodes</span>
<svg class="b" style="left:137px;top:641.9px;" width="10" height="10" viewBox="0 0 10 10"><circle cx="5" cy="5" r="3.300" fill="none" stroke="#5a97bd" stroke-width="1.300"/></svg>
<span class="t" style="top:675.9px;font-size:12.06px;color:#1567a3;left:157px;letter-spacing:-0.209px;">Vendors</span>
<svg class="b" style="left:137px;top:679.9px;" width="10" height="10" viewBox="0 0 10 10"><circle cx="5" cy="5" r="3.300" fill="none" stroke="#5a97bd" stroke-width="1.300"/></svg>
<span class="t" style="top:713.9px;font-size:12.06px;color:#1567a3;left:157px;letter-spacing:-0.288px;">Customers</span>
<svg class="b" style="left:137px;top:717.9px;" width="10" height="10" viewBox="0 0 10 10"><circle cx="5" cy="5" r="3.300" fill="none" stroke="#5a97bd" stroke-width="1.300"/></svg>
<span class="t" style="top:751.9px;font-size:12.06px;color:#1567a3;left:157px;letter-spacing:-0.011px;">Workorders</span>
<svg class="b" style="left:136px;top:756.9px;" width="11" height="9" viewBox="0 0 11 9"><path d="M3.500 2h6.500M1 6.500h6" stroke="#5a97bd" stroke-width="1.300"/></svg>
<span class="t" style="top:789.9px;font-size:12.06px;color:#1567a3;left:157px;letter-spacing:-0.371px;">Stores</span>
<svg class="b" style="left:137px;top:793.9px;" width="10" height="10" viewBox="0 0 10 10"><circle cx="5" cy="5" r="3.300" fill="none" stroke="#5a97bd" stroke-width="1.300"/></svg>
<span class="t" style="top:827.9px;font-size:12.06px;color:#1567a3;left:157px;letter-spacing:-0.709px;">Expenses</span>
<svg class="b" style="left:137px;top:831.9px;" width="10" height="10" viewBox="0 0 10 10"><circle cx="5" cy="5" r="3.300" fill="none" stroke="#5a97bd" stroke-width="1.300"/></svg>
<span class="t" style="top:865.9px;font-size:12.06px;color:#1567a3;left:157px;letter-spacing:-0.182px;">Attach Files</span>
<svg class="b" style="left:136px;top:868.9px;" width="13" height="13" viewBox="0 0 13 13"><path d="M10.500 5.500l-4.500 4.500a2.100 2.100 0 0 1-3-3l5-5a1.500 1.500 0 0 1 2.100 2.100l-4.600 4.600" fill="none" stroke="#5a97bd" stroke-width="1.100" transform="rotate(8 6 6)"/></svg>
<span class="t" style="top:865.9px;font-size:12.06px;color:#1567a3;left:274px;">2</span>
<svg class="b" style="left:297px;top:373px;" width="160" height="130" viewBox="0 0 160 130"><defs><linearGradient id="ig" x1="0" x2="1" y1="0" y2="0"><stop offset="0" stop-color="#03040b"/><stop offset=".580" stop-color="#04050e"/><stop offset=".650" stop-color="#0b1330"/><stop offset=".710" stop-color="#22386f"/><stop offset=".780" stop-color="#36549a"/><stop offset=".900" stop-color="#466ab2"/><stop offset="1" stop-color="#5479c2"/></linearGradient><radialGradient id="iv" gradientUnits="userSpaceOnUse" cx="168" cy="82" r="62"><stop offset="0" stop-color="#86aae6" stop-opacity=".500"/><stop offset="1" stop-color="#86aae6" stop-opacity="0"/></radialGradient><radialGradient id="iw" gradientUnits="userSpaceOnUse" cx="150" cy="-14" r="62"><stop offset="0" stop-color="#081238" stop-opacity=".650"/><stop offset="1" stop-color="#081238" stop-opacity="0"/></radialGradient><linearGradient id="ih" gradientUnits="userSpaceOnUse" x1="62" x2="100" y1="0" y2="0"><stop offset="0" stop-color="#05060f" stop-opacity="0"/><stop offset="1" stop-color="#070916"/></linearGradient><filter color-interpolation-filters="sRGB" id="ib" x="-20%" y="-20%" width="140%" height="140%"><feGaussianBlur stdDeviation="2.200"/></filter><clipPath id="ic"><rect width="160" height="130"/></clipPath></defs><rect width="160" height="130" fill="url(#ig)"/><rect width="160" height="130" fill="url(#iv)"/><rect width="160" height="130" fill="url(#iw)"/><g clip-path="url(#ic)"><g filter="url(#ib)"><path d="M138 93l24-4v8l-24 3z" fill="#2f4d8e"/><path d="M130 136c2-10 8-23 16-23 5 0 7 10 9 23z" fill="#9db2e4"/><path d="M60 134V44c12-12 38-20 54-18 14 3 20 22 21 48 1 22 4 42 8 60z" fill="url(#ih)"/><ellipse cx="113" cy="84" rx="12" ry="27" fill="#222140"/><ellipse cx="117" cy="92" rx="6" ry="12" fill="#2e2b4e"/><ellipse cx="112" cy="77" rx="8" ry="3" fill="#14142a"/></g><path d="M119 72l5 1.500" stroke="#9fb0e0" stroke-width="1" opacity=".700"/></g></svg>
<span class="t" style="top:371.7px;font-size:11.58px;color:#111;left:473px;letter-spacing:0.256px;">Name: 00</span>
<span class="t" style="top:395px;font-size:11.58px;color:#111;left:473px;letter-spacing:-0.135px;">Description: 85767867867867</span>
<div class="b" style="left:990px;top:368.6px;width:118px;height:24.8px;background:#045e9b;border-radius:1.500px"></div>
<span class="t" style="top:371.8px;font-size:11.58px;color:#fff;left:1005.3px;letter-spacing:-0.774px;">CREATE NEW PO</span>
<div class="b" style="left:1109px;top:368.6px;width:22px;height:24.8px;background:#045e9b;border-radius:1.500px"></div>
<svg class="b" style="left:1116px;top:379.5px;" width="8" height="4" viewBox="0 0 8 4"><path d="M0 0h8l-4.0 4z" fill="#fff"/></svg>
<div class="b" style="left:1141px;top:368.6px;width:115px;height:24.8px;background:#045e9b;border-radius:1.500px"></div>
<span class="t" style="top:371.8px;font-size:11.58px;color:#fff;left:1156px;letter-spacing:-0.698px;">ITEM OVERVIEW</span>
<div class="b" style="left:1257px;top:368.6px;width:22px;height:24.8px;background:#045e9b;border-radius:1.500px"></div>
<svg class="b" style="left:1264px;top:379.5px;" width="8" height="4" viewBox="0 0 8 4"><path d="M0 0h8l-4.0 4z" fill="#fff"/></svg>
<div class="b" style="left:289px;top:514px;width:998px;height:1px;background:#e9e9e9"></div>
<div class="b" style="left:780px;top:515px;width:1px;height:378px;background:#ececec"></div>
<div class="b" style="left:289px;top:893px;width:998px;height:1px;background:#e4e4e4"></div>
<div class="b" style="left:1276px;top:530px;width:7px;height:208px;background:#f1f1f1"></div>
<svg class="b" style="left:1275px;top:519px;" width="9" height="6" viewBox="0 0 9 6"><path d="M1 5l3.500-3.500L8 5" fill="none" stroke="#f0f0f0" stroke-width="1"/></svg>
<svg class="b" style="left:1275px;top:884px;" width="9" height="6" viewBox="0 0 9 6"><path d="M1 1l3.500 3.500L8 1" fill="none" stroke="#f0f0f0" stroke-width="1"/></svg>
<span class="t" style="top:524.5px;font-size:13.03px;color:#222;left:297px;letter-spacing:-0.594px;">BASIC INFO</span>
<span class="t" style="top:524.5px;font-size:13.03px;color:#222;left:789px;letter-spacing:-0.693px;">INVENTORY</span>
<span class="t" style="top:621.5px;font-size:13.03px;color:#222;left:789px;letter-spacing:-0.900px;">ECOMMERCE STOCK SETTINGS</span>
<span class="t" style="top:719.7px;font-size:13.03px;color:#222;left:789px;letter-spacing:-0.471px;">ADDITIONAL SETTINGS</span>
<span class="t" style="top:553px;font-size:10.62px;color:#5b5b5b;left:297px;">ITEM NAME</span>
<span class="t" style="top:553.5px;font-size:20.27px;color:#e3342f;left:356.5px;">*</span>
<span class="t" style="top:553px;font-size:10.62px;color:#5b5b5b;left:462px;letter-spacing:-0.358px;">ITEM TYPE</span>
<span class="t" style="top:553.5px;font-size:20.27px;color:#e3342f;left:515.5px;">*</span>
<span class="t" style="top:553px;font-size:10.62px;color:#5b5b5b;left:620px;letter-spacing:-0.211px;">SUBITEM OF</span>
<div class="b" style="left:297px;top:573.2px;width:151px;height:24.5px;background:#f3f3f3;border-radius:2px;box-sizing:border-box;border:1px solid #efefef"></div>
<span class="t" style="top:577px;font-size:11.58px;color:#1b1b1b;left:304.7px;letter-spacing:0.419px;">00</span>
<div class="b" style="left:462px;top:573.2px;width:144px;height:24.5px;background:#f3f3f3;border-radius:2px;box-sizing:border-box;border:1px solid #efefef"></div>
<span class="t" style="top:577px;font-size:11.58px;color:#1b1b1b;left:467.2px;letter-spacing:0.241px;">Inventory Item</span>
<svg class="b" style="left:588.75px;top:583.65px;" width="9.5" height="6.5" viewBox="0 0 9.5 6.5"><path d="M0 0h9.5l-4.75 6.5z" fill="#b7b7b7"/></svg>
<div class="b" style="left:620px;top:573.2px;width:152px;height:24.5px;background:#f6f6f6;border-radius:2px;box-sizing:border-box;border:1px solid #efefef"></div>
<span class="t" style="top:577px;font-size:11.58px;color:#b4b4b4;left:626px;letter-spacing:0.114px;">Parent Item</span>
<svg class="b" style="left:756.75px;top:583.65px;" width="9.5" height="6.5" viewBox="0 0 9.5 6.5"><path d="M0 0h9.5l-4.75 6.5z" fill="#b7b7b7"/></svg>
<span class="t" style="top:608px;font-size:10.62px;color:#5b5b5b;left:297px;letter-spacing:-0.465px;">DEPARTMENT</span>
<span class="t" style="top:608px;font-size:10.62px;color:#5b5b5b;left:462px;letter-spacing:-0.204px;">MANUFACTURER'S PART #</span>
<div class="b" style="left:297px;top:628.3px;width:151px;height:24.5px;background:#f6f6f6;border-radius:2px;box-sizing:border-box;border:1px solid #efefef"></div>
<span class="t" style="top:632.1px;font-size:11.58px;color:#b4b4b4;left:303.4px;letter-spacing:0.300px;">Department</span>
<svg class="b" style="left:433.75px;top:638.75px;" width="9.5" height="6.5" viewBox="0 0 9.5 6.5"><path d="M0 0h9.5l-4.75 6.5z" fill="#b7b7b7"/></svg>
<div class="b" style="left:462px;top:628.3px;width:144px;height:24.5px;background:#f7f7f7;border-radius:2px;box-sizing:border-box;border:1px solid #e3e3e3"></div>
<span class="t" style="top:632.1px;font-size:11.58px;color:#b4b4b4;left:468px;letter-spacing:0.215px;">Manufacturer`s part #</span>
<div class="b" style="left:626.6px;top:636.6px;width:18px;height:7px;background:#e8e8e8;border-radius:4px"></div>
<svg class="b" style="left:619.6px;top:633.1px;" width="14" height="14" viewBox="0 0 14 14"><circle cx="7" cy="7" r="5.800" fill="#bdbdbd"/></svg>
<span class="t" style="top:630px;font-size:12.06px;color:#111;left:654.2px;letter-spacing:-0.261px;">Raw material</span>
<div class="b" style="left:743.5px;top:636.6px;width:18px;height:7px;background:#e8e8e8;border-radius:4px"></div>
<svg class="b" style="left:736.5px;top:633.1px;" width="14" height="14" viewBox="0 0 14 14"><circle cx="7" cy="7" r="5.800" fill="#bdbdbd"/></svg>
<span class="t" style="top:663px;font-size:10.62px;color:#5b5b5b;left:297px;letter-spacing:-0.027px;">INCOME ACCOUNT</span>
<span class="t" style="top:663.5px;font-size:20.27px;color:#e3342f;left:394.5px;">*</span>
<span class="t" style="top:663px;font-size:10.62px;color:#5b5b5b;left:462px;letter-spacing:-0.503px;">EXPENSE ACCOUNT</span>
<span class="t" style="top:663.5px;font-size:20.27px;color:#e3342f;left:560.5px;">*</span>
<span class="t" style="top:663px;font-size:10.62px;color:#5b5b5b;left:620px;letter-spacing:-0.317px;">ASSET ACCOUNT</span>
<span class="t" style="top:663.5px;font-size:20.27px;color:#e3342f;left:706.2px;">*</span>
<div class="b" style="left:297px;top:683.3px;width:151px;height:24.5px;background:#f3f3f3;border-radius:2px;box-sizing:border-box;border:1px solid #efefef"></div>
<span class="t" style="top:687.1px;font-size:11.58px;color:#1b1b1b;left:302px;letter-spacing:-0.592px;">Sales</span>
<svg class="b" style="left:433.75px;top:693.75px;" width="9.5" height="6.5" viewBox="0 0 9.5 6.5"><path d="M0 0h9.5l-4.75 6.5z" fill="#b7b7b7"/></svg>
<div class="b" style="left:462px;top:683.3px;width:144px;height:24.5px;background:#f3f3f3;border-radius:2px;box-sizing:border-box;border:1px solid #efefef"></div>
<span class="t" style="top:687.1px;font-size:11.58px;color:#1b1b1b;left:467.2px;letter-spacing:0.064px;">Cost of Goods Sold</span>
<svg class="b" style="left:592.25px;top:693.75px;" width="9.5" height="6.5" viewBox="0 0 9.5 6.5"><path d="M0 0h9.5l-4.75 6.5z" fill="#b7b7b7"/></svg>
<div class="b" style="left:620px;top:683.3px;width:152px;height:24.5px;background:#f3f3f3;border-radius:2px;box-sizing:border-box;border:1px solid #efefef"></div>
<span class="t" style="top:687.1px;font-size:11.58px;color:#1b1b1b;left:625.3px;letter-spacing:0.089px;">Inventory Assets</span>
<svg class="b" style="left:756.75px;top:693.75px;" width="9.5" height="6.5" viewBox="0 0 9.5 6.5"><path d="M0 0h9.5l-4.75 6.5z" fill="#b7b7b7"/></svg>
<span class="t" style="top:718px;font-size:10.62px;color:#5b5b5b;left:297px;letter-spacing:-0.394px;">BRAND</span>
<span class="t" style="top:718px;font-size:10.62px;color:#5b5b5b;left:462px;letter-spacing:-0.660px;">CATEGORY</span>
<span class="t" style="top:718px;font-size:10.62px;color:#5b5b5b;left:620px;letter-spacing:-0.032px;">THUMBNAIL IMAGE</span>
<div class="b" style="left:297px;top:738.5px;width:151px;height:24.5px;background:#f3f3f3;border-radius:2px;box-sizing:border-box;border:1px solid #efefef"></div>
<span class="t" style="top:741.4px;font-size:11.58px;color:#1b1b1b;left:300.5px;letter-spacing:-0.226px;">TestBran3; TestBrand</span>
<svg class="b" style="left:430.65px;top:748.95px;" width="9.5" height="6.5" viewBox="0 0 9.5 6.5"><path d="M0 0h9.5l-4.75 6.5z" fill="#b7b7b7"/></svg>
<div class="b" style="left:462px;top:738.5px;width:144px;height:24.5px;background:#f3f3f3;border-radius:2px;box-sizing:border-box;border:1px solid #efefef"></div>
<span class="t" style="top:741.4px;font-size:11.58px;color:#1b1b1b;left:465.1px;letter-spacing:-0.232px;">Testk</span>
<svg class="b" style="left:588.65px;top:748.95px;" width="9.5" height="6.5" viewBox="0 0 9.5 6.5"><path d="M0 0h9.5l-4.75 6.5z" fill="#b7b7b7"/></svg>
<div class="b" style="left:620px;top:738.5px;width:152px;height:24.5px;background:#f3f3f3;border-radius:2px;box-sizing:border-box;border:1px solid #efefef"></div>
<span class="t" style="top:741.4px;font-size:11.58px;color:#1b1b1b;left:625.3px;letter-spacing:0.020px;">Photo_from_camera_7/</span>
<svg class="b" style="left:756.75px;top:748.95px;" width="9.5" height="6.5" viewBox="0 0 9.5 6.5"><path d="M0 0h9.5l-4.75 6.5z" fill="#b7b7b7"/></svg>
<span class="t" style="top:773px;font-size:10.62px;color:#5b5b5b;left:297px;letter-spacing:-0.494px;">ITEM CLASS</span>
<div class="b" style="left:297px;top:793.4px;width:151px;height:24.5px;background:#f6f6f6;border-radius:2px;box-sizing:border-box;border:1px solid #efefef"></div>
<span class="t" style="top:797.2px;font-size:11.58px;color:#b4b4b4;left:302px;letter-spacing:-0.144px;">Item Class</span>
<svg class="b" style="left:430.65px;top:803.85px;" width="9.5" height="6.5" viewBox="0 0 9.5 6.5"><path d="M0 0h9.5l-4.75 6.5z" fill="#b7b7b7"/></svg>
<span class="t" style="top:828px;font-size:10.62px;color:#5b5b5b;left:297px;letter-spacing:-0.385px;">PRIMARY DESCRIPTION</span>
<div class="b" style="left:297px;top:848.2px;width:309px;height:45.3px;background:#f5f5f5;box-sizing:border-box;border:1px solid #ebebeb;border-bottom:0;border-radius:2px 2px 0 0"></div>
<span class="t" style="top:855px;font-size:11.58px;color:#444;left:304.7px;letter-spacing:0.034px;">85767867867867</span>
<svg class="b" style="left:618px;top:847.7px;" width="18" height="18" viewBox="0 0 18 18"><circle cx="9" cy="9" r="7.600" fill="#fff" stroke="#045e9b" stroke-width="1.800"/><circle cx="9" cy="9" r="4.300" fill="#045e9b"/></svg>
<span class="t" style="top:846px;font-size:12.06px;color:#111;left:653.2px;letter-spacing:-0.099px;">Display by default</span>
<span class="t" style="top:553px;font-size:10.62px;color:#5b5b5b;left:789px;letter-spacing:-0.769px;">SAFETY STOCK</span>
<span class="t" style="top:553px;font-size:10.62px;color:#5b5b5b;left:954.4px;letter-spacing:0.205px;">ON HAND</span>
<div class="b" style="left:789px;top:573.2px;width:151px;height:24.5px;background:#f3f3f3;border-radius:2px;box-sizing:border-box;border:1px solid #efefef"></div>
<span class="t" style="top:577px;font-size:11.58px;color:#1b1b1b;left:796.8px;">0</span>
<div class="b" style="left:954.4px;top:573.2px;width:144.6px;height:24.5px;background:#f6f6f6;border-radius:2px;box-sizing:border-box;border:1px solid #efefef"></div>
<span class="t" style="top:577px;font-size:11.58px;color:#9a9a9a;left:962.4px;letter-spacing:-0.176px;">777.500</span>
<div class="b" style="left:1114.5px;top:582.1px;width:19px;height:7.6px;background:#c9d4fb;border-radius:4px"></div>
<svg class="b" style="left:1125.4px;top:578.9px;" width="14" height="14" viewBox="0 0 14 14"><circle cx="7" cy="7" r="5.900" fill="#005a9e"/></svg>
<span class="t" style="top:576px;font-size:12.06px;color:#111;left:1147.3px;letter-spacing:-0.219px;">Stock Item</span>
<span class="t" style="top:651.3px;font-size:10.62px;color:#5b5b5b;left:789px;letter-spacing:-0.293px;">POSTED TO CHANNEL</span>
<div class="b" style="left:789px;top:671.2px;width:151px;height:24.5px;background:#f3f3f3;border-radius:2px;box-sizing:border-box;border:1px solid #efefef"></div>
<span class="t" style="top:675px;font-size:11.58px;color:#1b1b1b;left:793.7px;">%</span>
<svg class="b" style="left:922.55px;top:681.65px;" width="9.5" height="6.5" viewBox="0 0 9.5 6.5"><path d="M0 0h9.5l-4.75 6.5z" fill="#b7b7b7"/></svg>
<div class="b" style="left:954.4px;top:671.2px;width:144.6px;height:24.5px;background:#f5f5f5;border-radius:2px;box-sizing:border-box;border:1px solid #e6e6e6"></div>
<div class="b" style="left:790.7px;top:757.6px;width:19px;height:7.6px;background:#c9d4fb;border-radius:4px"></div>
<svg class="b" style="left:801.6px;top:754.4px;" width="14" height="14" viewBox="0 0 14 14"><circle cx="7" cy="7" r="5.900" fill="#005a9e"/></svg>
<span class="t" style="top:751.6px;font-size:12.06px;color:#111;left:823.2px;letter-spacing:-0.205px;">Don't show on POS Categories</span>
<div class="b" style="left:794.4px;top:784.7px;width:18px;height:7px;background:#e8e8e8;border-radius:4px"></div>
<svg class="b" style="left:787.4px;top:781.2px;" width="14" height="14" viewBox="0 0 14 14"><circle cx="7" cy="7" r="5.800" fill="#bdbdbd"/></svg>
<span class="t" style="top:778.9px;font-size:12.06px;color:#111;left:823.2px;letter-spacing:0.082px;">Don't show on App</span>
<div class="b" style="left:794.4px;top:811.7px;width:18px;height:7px;background:#e8e8e8;border-radius:4px"></div>
<svg class="b" style="left:787.4px;top:808.2px;" width="14" height="14" viewBox="0 0 14 14"><circle cx="7" cy="7" r="5.800" fill="#bdbdbd"/></svg>
<span class="t" style="top:805.7px;font-size:12.06px;color:#111;left:823.2px;letter-spacing:-0.201px;">Always Make new item on POS</span>
<div class="b" style="left:458.2px;top:708.8px;width:155.9px;height:68.2px;box-sizing:border-box;border:3.800px solid #f25a4b;filter:drop-shadow(1.800px 2.200px 1.200px rgba(0,0,0,.900))"></div>
<div class="b" style="left:771.4px;top:737.4px;width:237.7px;height:43.4px;box-sizing:border-box;border:3.800px solid #f25a4b;filter:drop-shadow(1.800px 2.200px 1.200px rgba(0,0,0,.900))"></div>
<div class="b" style="left:302.4px;top:919.3px;width:18px;height:7px;background:#e8e8e8;border-radius:4px"></div>
<svg class="b" style="left:295.4px;top:915.8px;" width="14" height="14" viewBox="0 0 14 14"><circle cx="7" cy="7" r="5.800" fill="#bdbdbd"/></svg>
<span class="t" style="top:913px;font-size:12.06px;color:#111;left:331px;letter-spacing:-0.050px;">Item is inactive</span>
<div class="b" style="left:1119px;top:910px;width:75px;height:24.5px;background:#ececec"></div>
<span class="t" style="top:913px;font-size:11.58px;color:#045e9b;left:1134.5px;letter-spacing:-0.695px;">CANCEL</span>
<div class="b" style="left:1204px;top:910px;width:75px;height:24.5px;background:#045e9b"></div>
<span class="t" style="top:913px;font-size:11.58px;color:#fff;left:1229px;letter-spacing:-1.200px;">SAVE</span>
</div>
</body></html>
